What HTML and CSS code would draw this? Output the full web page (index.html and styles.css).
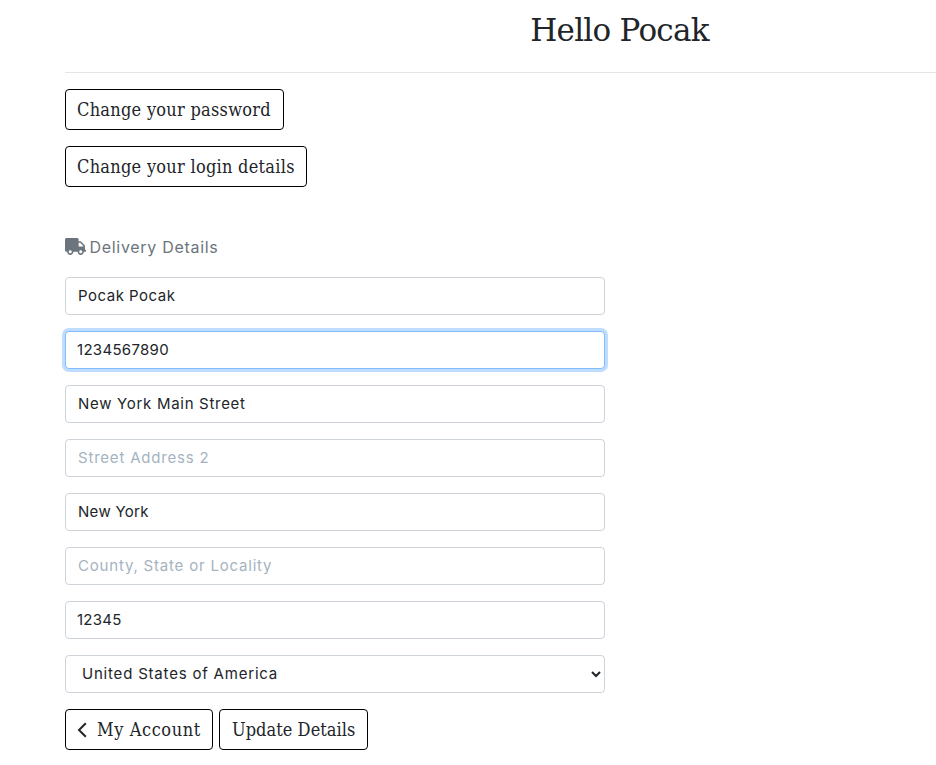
FILE: index.html
```html
<!DOCTYPE html>
<html lang="en">
<head>
<meta charset="utf-8">
<title>Account details</title>
<link rel="stylesheet" href="styles.css">
</head>
<body>
<main class="container">
  <h2 class="title"><span>Hello Pocak</span></h2>
  <hr class="rule">
  <div class="links">
    <a class="btn btn-password"><span>Change your password</span></a>
    <a class="btn btn-login"><span>Change your login details</span></a>
  </div>
  <form class="details">
    <p class="legend">
      <svg class="truck" viewBox="0 0 640 512" aria-hidden="true"><path d="M624 352h-16V243.900c0-12.700-5.100-24.900-14.100-33.900L494 110.100c-9-9-21.200-14.100-33.900-14.100H416V48c0-26.500-21.500-48-48-48H48C21.500 0 0 21.500 0 48v320c0 26.500 21.500 48 48 48h16c0 53 43 96 96 96s96-43 96-96h128c0 53 43 96 96 96s96-43 96-96h48c8.800 0 16-7.200 16-16v-32c0-8.800-7.200-16-16-16zM160 464c-26.500 0-48-21.500-48-48s21.500-48 48-48 48 21.500 48 48-21.500 48-48 48zm320 0c-26.500 0-48-21.500-48-48s21.500-48 48-48 48 21.500 48 48-21.500 48-48 48zm80-208H416V144h44.100l99.900 99.900V256z"/></svg>
      <span>Delivery Details</span>
    </p>
    <input class="field f-name" type="text" value="Pocak Pocak">
    <input class="field f-phone is-focused" type="text" value="1234567890">
    <input class="field f-street" type="text" value="New York Main Street">
    <input class="field f-street2" type="text" placeholder="Street Address 2">
    <input class="field f-city" type="text" value="New York">
    <input class="field f-county" type="text" placeholder="County, State or Locality">
    <input class="field f-zip" type="text" value="12345">
    <select class="field f-country"><option>United States of America</option></select>
    <div class="actions">
      <a class="btn btn-back"><svg class="chevron" viewBox="0 0 10 16" aria-hidden="true"><path d="M8.800 1.200 2 8l6.800 6.800"/></svg><span>My Account</span></a>
      <button class="btn btn-update" type="button"><span>Update Details</span></button>
    </div>
  </form>
</main>
</body>
</html>
```
FILE: styles.css
```css
* { box-sizing: border-box; }
body {
  margin: 0;
  background: #fff;
  color: #212529;
  font: 400 15px/24px Inter, "Liberation Sans", sans-serif;
}
.container { margin-left: 65px; padding-top: 11px; }
.title {
  margin: 0;
  padding-left: 238px;
  text-align: center;
  font: 400 31px/38px "DejaVu Serif", serif;
  letter-spacing: -0.75px;
}
.rule { margin: 23px 0 16px; border: 0; border-top: 1px solid #e5e5e5; }
.links { display: flex; flex-direction: column; align-items: flex-start; gap: 16px; }
.btn {
  display: flex;
  align-items: center;
  height: 41px;
  padding: 0 11px;
  border: 1px solid #000;
  border-radius: 4px;
  background: #fff;
  color: #212529;
  font: 400 18px/26px "DejaVu Serif Condensed", "DejaVu Serif", serif;
  font-stretch: condensed;
  letter-spacing: 0.27px;
  white-space: nowrap;
}
.btn-password { width: 219px; }
.btn-login { width: 242px; }
.btn-back { width: 148px; letter-spacing: 0.6px; }
.btn-update { width: 149px; padding-left: 12px; letter-spacing: 0.05px; }
.details { display: flex; flex-direction: column; gap: 16px; width: 540px; margin-top: 48px; }
.legend {
  display: flex;
  align-items: center;
  gap: 4px;
  height: 24px;
  margin: 0 0 2px;
  color: #6c757d;
  font-size: 16px;
  letter-spacing: 0.7px;
}
.truck { width: 21px; height: 17px; margin: -1px 0 0 -0.5px; fill: currentColor; }
.field {
  width: 100%;
  height: 38px;
  margin: 0;
  padding: 5px 12px 7px;
  border: 1px solid #ced4da;
  border-radius: 4px;
  outline: 0;
  background: #fff;
  color: #212529;
  font: 400 15px/24px Inter, "Liberation Sans", sans-serif;
  letter-spacing: 0.7px;
}
.field::placeholder { color: #a5b3c1; opacity: 1; letter-spacing: 0.8px; }
.f-name { letter-spacing: 0.5px; }
.f-phone { padding-left: 11px; letter-spacing: 0.3px; }
.f-city { letter-spacing: 0.3px; }
.f-zip { padding-left: 11px; letter-spacing: 0.25px; }
.is-focused { border-color: #80bdff; box-shadow: 0 0 0 3px #bfdeff; }
.actions { display: flex; gap: 6px; }
.chevron { width: 10px; height: 16px; margin-right: 10px; fill: none; stroke: currentColor; stroke-width: 2; }
select.field { padding: 5px 1px 7px 12px; letter-spacing: 0.8px; }
```
